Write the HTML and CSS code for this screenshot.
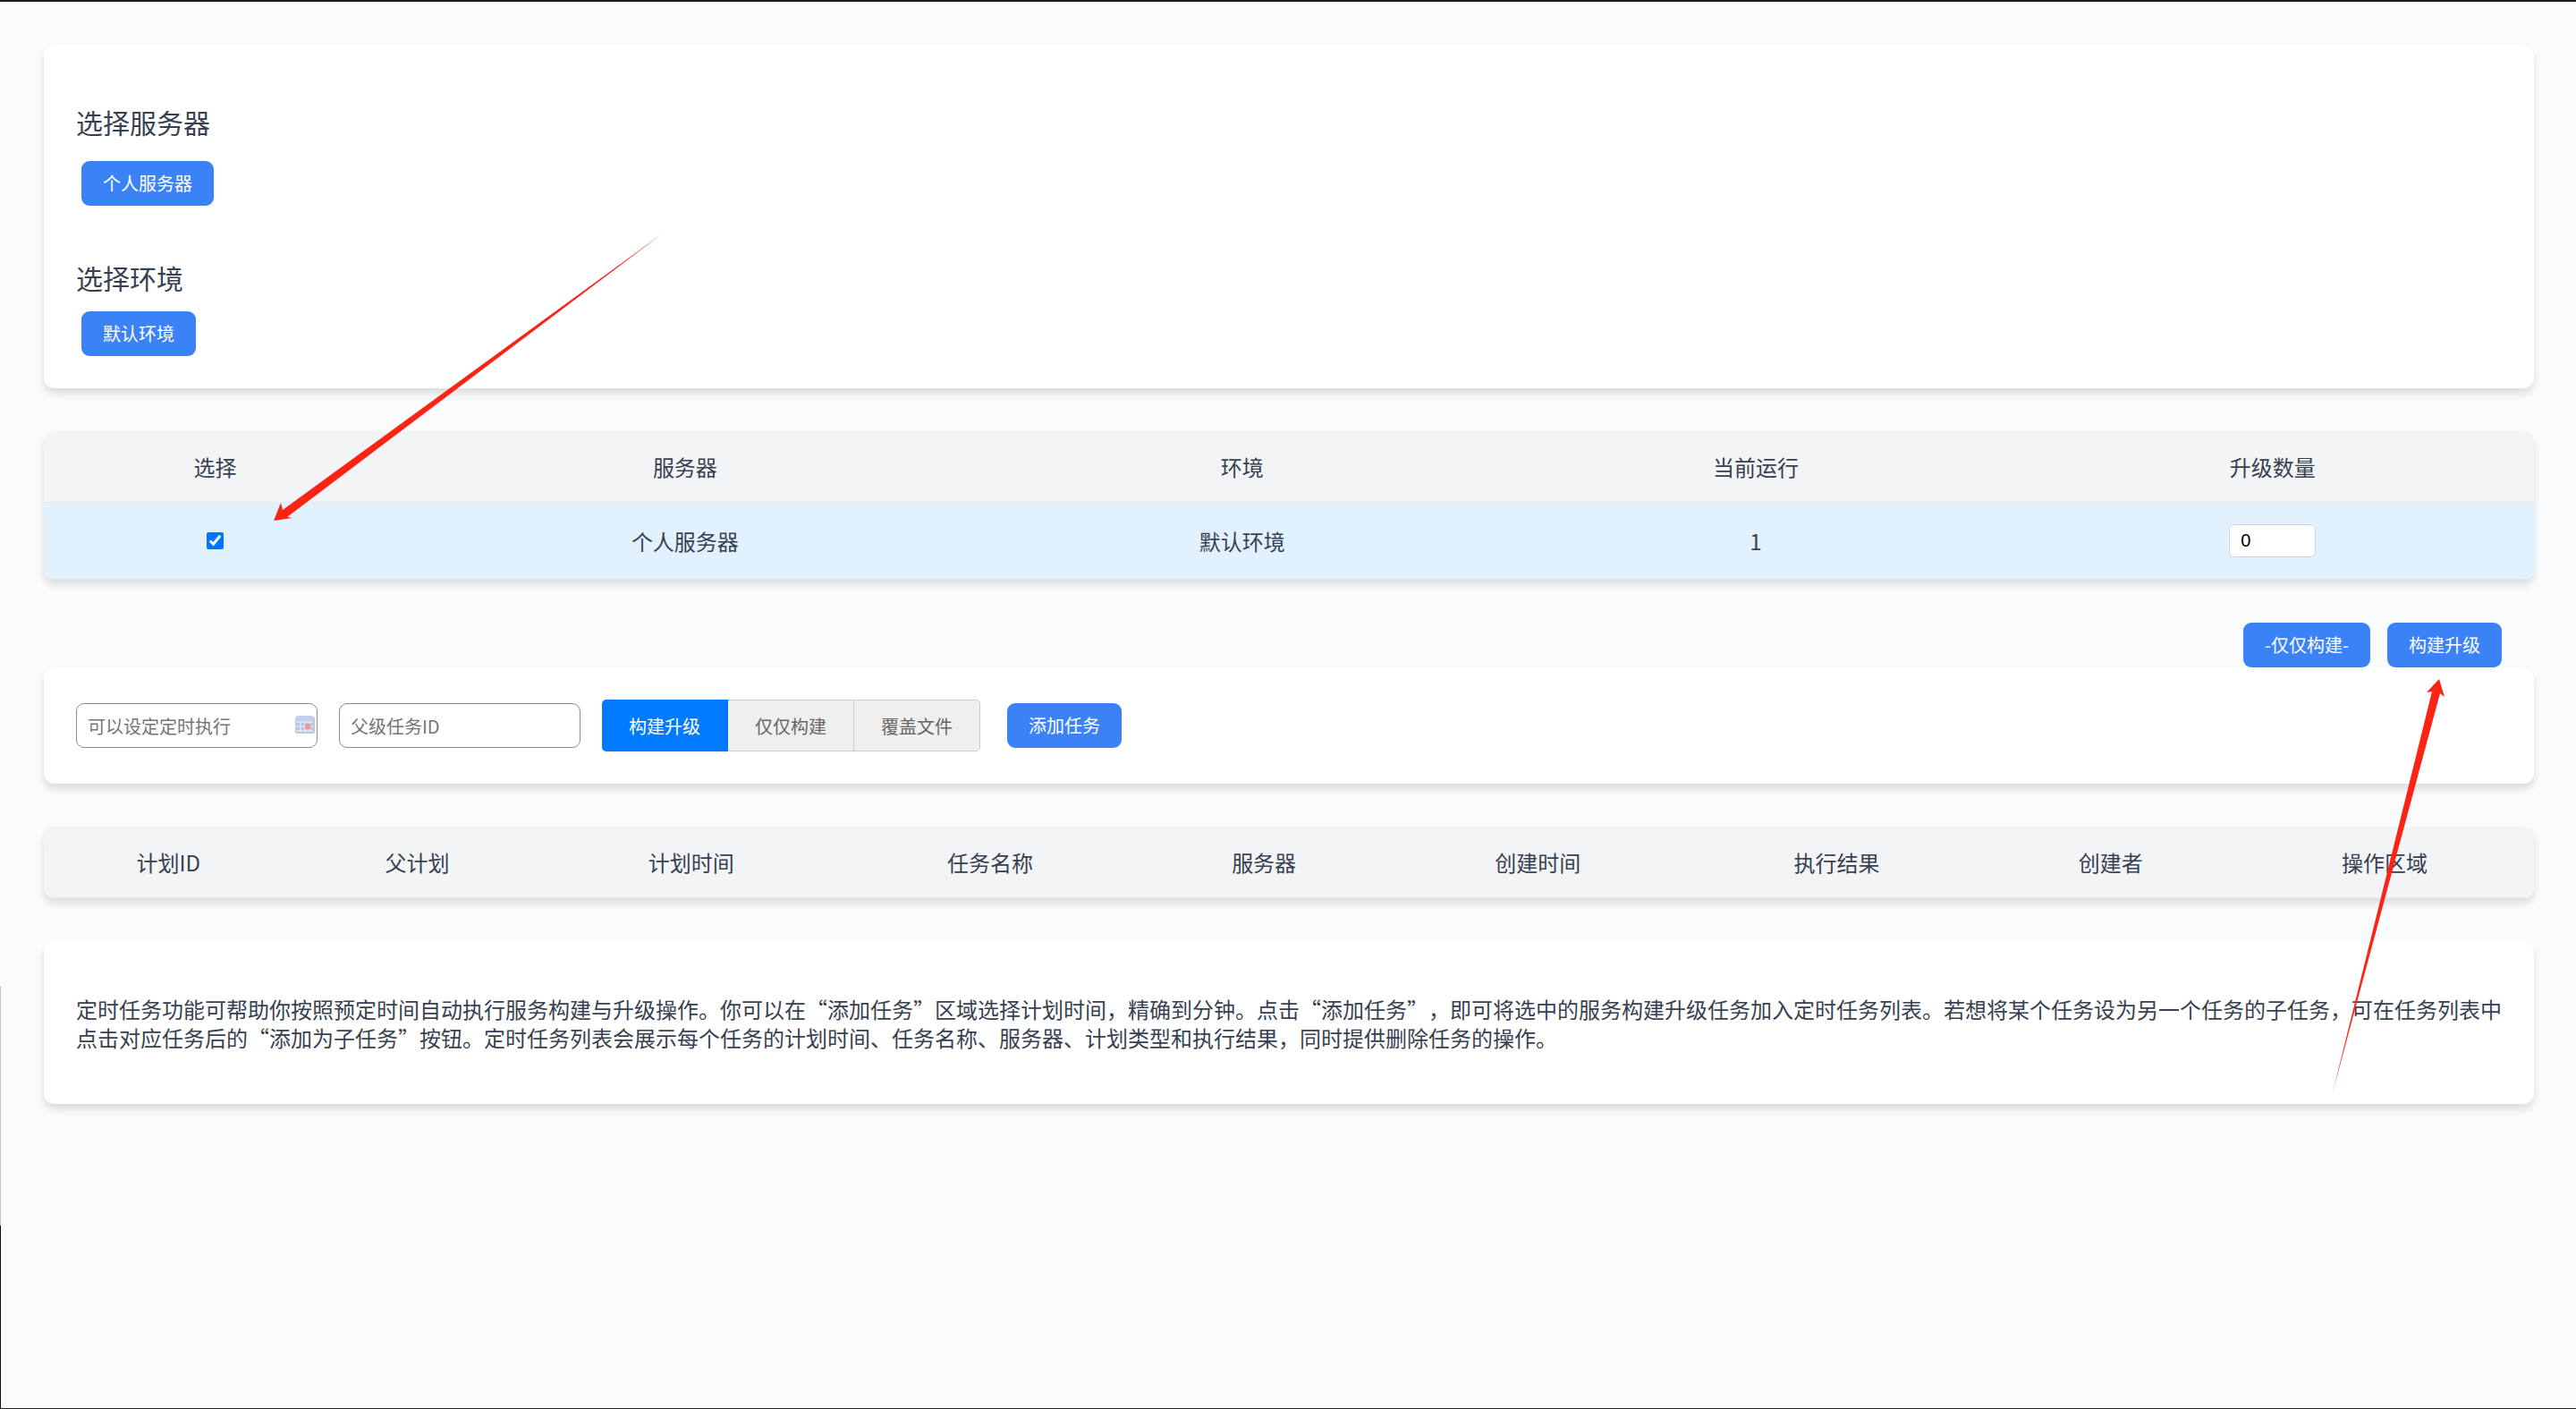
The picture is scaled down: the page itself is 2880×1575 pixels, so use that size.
FILE: index.html
```html
<!DOCTYPE html>
<html lang="zh-CN">
<head>
  <meta charset="UTF-8">
  <meta name="viewport" content="width=device-width, initial-scale=1.0">
  <title>服务构建升级</title>
  <link rel="stylesheet" href="styles.css">
</head>
<body>
  <div class="edge-left"></div>

  <main class="page">
    <section class="card">
      <h2 class="card-title">选择服务器</h2>
      <div class="btn-list server-list">
        <button class="btn" type="button">个人服务器</button>
      </div>
      <h2 class="card-title">选择环境</h2>
      <div class="btn-list">
        <button class="btn" type="button">默认环境</button>
      </div>
    </section>

    <table class="table service-table">
      <colgroup>
        <col class="col-select">
        <col class="col-server">
        <col class="col-env">
        <col class="col-running">
        <col class="col-count">
      </colgroup>
      <thead>
        <tr>
          <th>选择</th>
          <th>服务器</th>
          <th>环境</th>
          <th>当前运行</th>
          <th>升级数量</th>
        </tr>
      </thead>
      <tbody>
        <tr class="selected">
          <td><input class="row-check" type="checkbox" aria-label="选择个人服务器" checked></td>
          <td>个人服务器</td>
          <td>默认环境</td>
          <td>1</td>
          <td><input class="count-input" type="number" aria-label="升级数量" value="0"></td>
        </tr>
      </tbody>
    </table>

    <div class="actions">
      <button class="btn" type="button">-仅仅构建-</button>
      <button class="btn" type="button">构建升级</button>
    </div>

    <form class="card task-form">
      <div class="date-field">
        <input class="text-input" type="text" aria-label="计划时间" placeholder="可以设定定时执行">
        <svg class="date-icon" viewBox="0 0 22 20" aria-hidden="true">
          <rect x="0" y="1" width="22" height="19" rx="2" fill="#c2c8d6"/>
          <rect x="1" y="0" width="19" height="6" rx="2" fill="#c3cfe9"/>
          <rect x="1" y="6" width="19" height="12" fill="#b9c8e8"/>
          <path d="M1 7h19M1 12h19M1 17h19M6 7v11M11 7v11M16 7v11" stroke="#eef2fb" stroke-width="1"/>
          <rect x="11" y="9" width="6" height="6" fill="#eb9c93"/>
        </svg>
      </div>
      <input class="text-input" type="text" aria-label="父级任务ID" placeholder="父级任务ID">
      <div class="type-group">
        <button class="type-btn active" type="button">构建升级</button>
        <button class="type-btn" type="button">仅仅构建</button>
        <button class="type-btn" type="button">覆盖文件</button>
      </div>
      <button class="btn add-btn" type="button">添加任务</button>
    </form>

    <table class="table plan-table">
      <colgroup>
        <col class="col-narrow">
        <col class="col-narrow">
        <col class="col-wide">
        <col class="col-wide">
        <col class="col-narrow">
        <col class="col-wide">
        <col class="col-wide">
        <col class="col-narrow">
        <col class="col-wide">
      </colgroup>
      <thead>
        <tr>
          <th>计划ID</th>
          <th>父计划</th>
          <th>计划时间</th>
          <th>任务名称</th>
          <th>服务器</th>
          <th>创建时间</th>
          <th>执行结果</th>
          <th>创建者</th>
          <th>操作区域</th>
        </tr>
      </thead>
    </table>

    <section class="card">
      <p class="help-text">定时任务功能可帮助你按照预定时间自动执行服务构建与升级操作。你可以在“添加任务”区域选择计划时间，精确到分钟。点击“添加任务”，即可将选中的服务构建升级任务加入定时任务列表。若想将某个任务设为另一个任务的子任务，可在任务列表中点击对应任务后的“添加为子任务”按钮。定时任务列表会展示每个任务的计划时间、任务名称、服务器、计划类型和执行结果，同时提供删除任务的操作。</p>
    </section>
  </main>

  <svg class="arrow arrow-check" viewBox="0 0 436 322" aria-hidden="true">
    <path d="M0 324L8 304L10 312L436 2L15 320L21 321Z"/>
  </svg>
  <svg class="arrow arrow-build" viewBox="0 0 126 462" aria-hidden="true">
    <path d="M119 0L125 20L120 16L0 462L111 14L105 15Z"/>
  </svg>
</body>
</html>
```
FILE: styles.css
```css
* {
  box-sizing: border-box;
}

body {
  position: relative;
  margin: 0;
  min-height: 100vh;
  border-top: 2px solid #1c1c1e;
  border-bottom: 1px solid #1f2023;
  background: #fafbfd;
  color: #374151;
  font-family: "Noto Sans CJK SC", sans-serif;
  font-size: 24px;
  text-spacing-trim: space-all;
}

button,
input {
  font-family: inherit;
  font-size: 20px;
}

.edge-left {
  position: absolute;
  top: 0;
  bottom: 0;
  left: 0;
  width: 1px;
  background: linear-gradient(transparent 70%, #c4c6c8 70%, #c4c6c8 87%, #111 87%);
}

.page {
  padding: 48px 47px 48px 49px;
}

.card {
  padding: 36px;
  border-radius: 12px;
  background: #fff;
  box-shadow: 0 6px 9px rgba(0, 0, 0, 0.12);
}

.card-title {
  margin: 30px 0 18px;
  font-size: 30px;
  font-weight: 400;
  line-height: 40px;
}

.btn-list {
  display: flex;
  gap: 12px;
  padding: 0 6px;
}

.server-list {
  margin: 24px 0 60px;
}

.btn {
  height: 50px;
  padding: 0 24px;
  border: none;
  border-radius: 9px;
  background: #3b82f6;
  color: #fff;
  line-height: 30px;
  cursor: pointer;
}

.btn:hover {
  background: #2563eb;
}

.table {
  width: 100%;
  margin: 48px 0;
  border-spacing: 0;
  border-radius: 12px;
  overflow: hidden;
  table-layout: fixed;
  background: #fff;
  box-shadow: 0 6px 9px rgba(0, 0, 0, 0.12);
  text-align: center;
}

.table th {
  height: 80px;
  padding: 0 18px;
  border-bottom: 1px solid #e5e7eb;
  background: #f3f4f6;
  font-weight: 400;
}

.table td {
  height: 86px;
  padding: 0 18px;
  border-bottom: 1px solid #e5e7eb;
}

.table .selected td {
  background: #e1f1fe;
}

.col-select { width: 13.75%; }
.col-server { width: 24%; }
.col-env { width: 20.75%; }
.col-running { width: 20.5%; }
.col-count { width: 21%; }

.col-narrow { width: 10%; }
.col-wide { width: 12%; }

.row-check {
  display: block;
  width: 19px;
  height: 19px;
  margin: 0 auto;
  accent-color: #0075ff;
}

.count-input {
  display: block;
  width: 97px;
  height: 37px;
  margin: 0 auto;
  padding: 0 12px;
  border: 1px solid #d1d5db;
  border-radius: 6px;
  background: #fff;
  font-family: "Liberation Sans", Arial, sans-serif;
}

.actions {
  display: flex;
  justify-content: flex-end;
  gap: 19px;
  padding-right: 36px;
}

.task-form {
  display: flex;
  align-items: center;
  gap: 24px;
}

.date-field {
  position: relative;
}

.text-input {
  display: block;
  width: 270px;
  height: 50px;
  padding: 0 12px;
  border: 1px solid #8b8b8b;
  border-radius: 9px;
  background: #fff;
}

.text-input::placeholder {
  color: #757575;
}

.date-icon {
  position: absolute;
  top: 14px;
  right: 3px;
  width: 22px;
  height: 20px;
}

.type-group {
  display: flex;
}

.type-btn {
  height: 58px;
  padding: 0 30px;
  border: 1px solid #ccc;
  border-left: none;
  background: #efefef;
  color: #666;
  cursor: pointer;
}

.type-btn:first-child {
  border-radius: 5px 0 0 5px;
}

.type-btn:last-child {
  border-radius: 0 5px 5px 0;
}

.type-btn.active {
  border-color: #007bff;
  background: #007bff;
  color: #fff;
}

.add-btn {
  margin-left: 6px;
}

.help-text {
  margin: 24px 0 22px;
  line-height: 32px;
}

/* pointers drawn over the page */
.arrow {
  position: absolute;
  overflow: visible;
  fill: #fb2314;
  pointer-events: none;
}

.arrow-check {
  top: 256px;
  left: 306px;
  width: 436px;
}

.arrow-build {
  top: 757px;
  right: 146px;
  width: 126px;
}
```
